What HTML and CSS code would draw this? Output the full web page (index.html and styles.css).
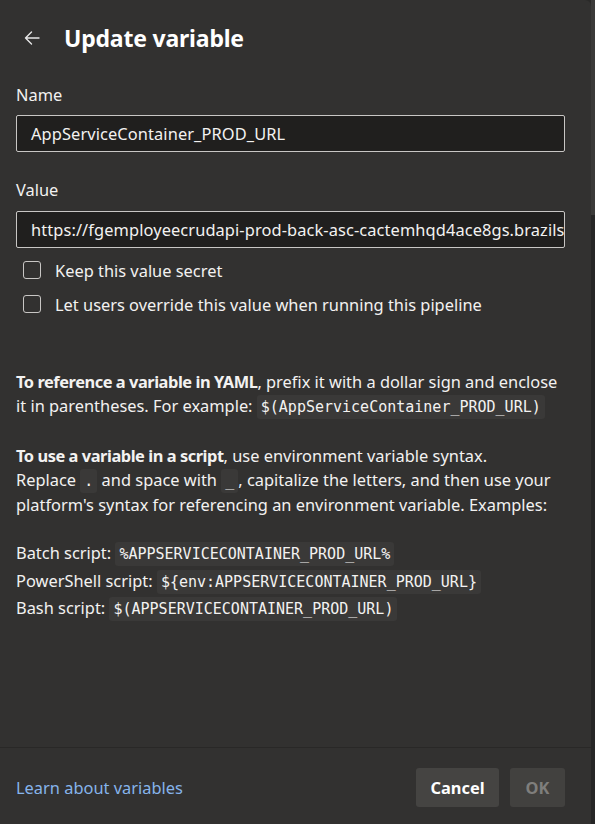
FILE: index.html
```html
<!DOCTYPE html>
<html lang="en">
<head>
<meta charset="utf-8">
<title>Update variable</title>
<link rel="stylesheet" href="styles.css">
</head>
<body>
<div class="page">
  <div class="panel">
    <div class="header">
      <span class="back">
        <svg width="18" height="18" viewBox="0 0 18 18" fill="none" stroke="#e6e6e6" stroke-width="1.4" stroke-linecap="round" stroke-linejoin="round"><path d="M16 9H2.5M8.5 3L2.5 9l6 6"/></svg>
      </span>
      <h1 class="title">Update variable</h1>
    </div>
    <div class="body">
      <label class="field-label">Name</label>
      <div class="input">AppServiceContainer_PROD_URL</div>
      <label class="field-label value-label">Value</label>
      <div class="input clip">https://fgemployeecrudapi-prod-back-asc-cactemhqd4ace8gs.brazilsouth-01.azurewebsites.net</div>
      <div class="checks">
        <div class="check"><span class="box"></span><span>Keep this value secret</span></div>
        <div class="check"><span class="box"></span><span>Let users override this value when running this pipeline</span></div>
      </div>
      <p class="para first"><b>To reference a variable in YAML</b>, prefix it with a dollar sign and enclose it in parentheses. For example: <code>$(AppServiceContainer_PROD_URL)</code></p>
      <p class="para"><b>To use a variable in a script</b>, use environment variable syntax.<br>Replace <code>.</code> and space with <code>_</code>, capitalize the letters, and then use your platform's syntax for referencing an environment variable. Examples:</p>
      <div class="scripts">
        <div>Batch script: <code>%APPSERVICECONTAINER_PROD_URL%</code></div>
        <div>PowerShell script: <code>${env:APPSERVICECONTAINER_PROD_URL}</code></div>
        <div>Bash script: <code>$(APPSERVICECONTAINER_PROD_URL)</code></div>
      </div>
    </div>
    <div class="footer">
      <a class="link" href="#">Learn about variables</a>
      <div class="buttons">
        <button class="btn cancel">Cancel</button>
        <button class="btn disabled">OK</button>
      </div>
    </div>
  </div>
  <div class="rail"><div class="thumb"></div></div>
</div>
</body>
</html>
```
FILE: styles.css
```css
html, body {
  margin: 0;
  padding: 0;
  height: 100%;
  background: #2a2928;
}
body {
  font-family: "Noto Sans", "Open Sans", sans-serif;
  color: #f3f2f1;
  font-size: 16.4px;
}
.page {
  display: flex;
  height: 824px;
}
.panel {
  width: 591px;
  height: 824px;
  background: #323130;
  border-top-right-radius: 6px;
  display: flex;
  flex-direction: column;
}
.rail {
  flex: 1;
  background: #262626;
  display: flex;
  flex-direction: column;
}
.thumb {
  height: 215px;
  background: #3b3a39;
}
.header {
  display: flex;
  align-items: center;
  height: 75px;
  padding-left: 23px;
}
.back {
  display: flex;
  width: 18px;
  height: 18px;
  margin-right: 23px;
}
.title {
  margin: 0;
  font-size: 23px;
  font-weight: 700;
  color: #ffffff;
  letter-spacing: -0.2px;
}
.body {
  flex: 1;
  padding: 0 26px 0 16px;
  display: flex;
  flex-direction: column;
}
.field-label {
  line-height: 20px;
  margin-top: 10px;
  margin-bottom: 10px;
}
.value-label {
  margin-top: 28px;
  margin-bottom: 11px;
}
.input {
  box-sizing: border-box;
  height: 37px;
  border: 1px solid #c8c6c4;
  border-radius: 2px;
  background: #201f1e;
  display: flex;
  align-items: center;
  padding: 0 14px;
  white-space: nowrap;
  overflow: hidden;
  letter-spacing: 0.1px;
}
.checks {
  display: flex;
  flex-direction: column;
  gap: 16px;
  margin-top: 13px;
  padding-left: 7px;
}
.check {
  display: flex;
  align-items: center;
  height: 18px;
}
.box {
  box-sizing: border-box;
  width: 18px;
  height: 18px;
  border: 1px solid #c8c6c4;
  border-radius: 3px;
  margin-right: 14px;
  flex: none;
}
.para {
  margin: 0;
  line-height: 24px;
}
.para b {
  letter-spacing: -0.45px;
}
.para.first {
  margin-top: 57px;
  margin-bottom: 25px;
}
code {
  font-family: "DejaVu Sans Mono", monospace;
  font-size: 15px;
  background: #3a3938;
  border-radius: 3px;
  padding: 3px 4px;
}
.scripts {
  margin-top: 23px;
  line-height: 25.5px;
}
.footer {
  border-top: 1px solid #292827;
  height: 77px;
  box-sizing: border-box;
  padding: 2px 26px 0 16px;
  display: flex;
  align-items: center;
  justify-content: space-between;
}
.link {
  color: #86b4eb;
  text-decoration: none;
}
.buttons {
  display: flex;
  gap: 11px;
}
.btn {
  font-family: inherit;
  font-size: 16.4px;
  font-weight: 700;
  height: 39px;
  border: none;
  border-radius: 3px;
  background: #454442;
  color: #ffffff;
  padding: 0;
}
.btn.cancel {
  width: 83px;
}
.btn.disabled {
  color: #7f7e7c;
  width: 55px;
  background: #42413f;
}
```
